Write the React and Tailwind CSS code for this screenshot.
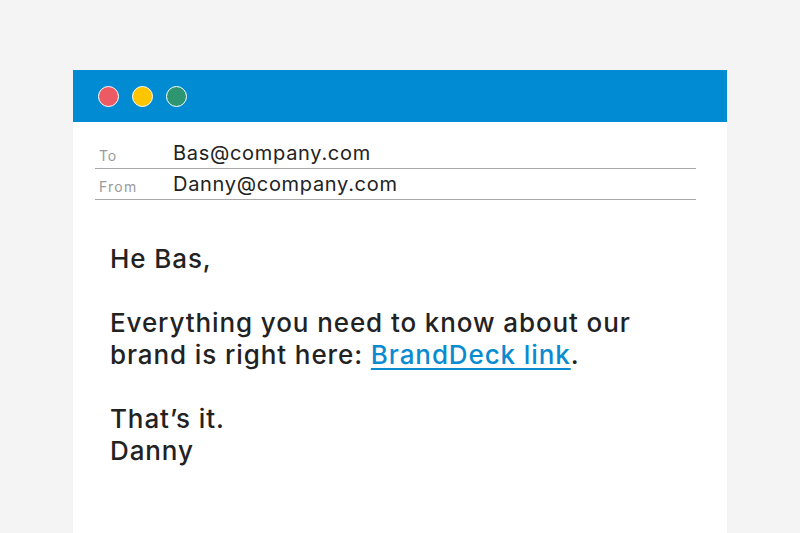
import React from "react";

const Dot = ({ color }) => (
  <span className={`block w-[21px] h-[21px] rounded-full border-[1.5px] border-white ${color}`} />
);

export default function App() {
  return (
    <div className="w-[800px] h-[533px] bg-[#f4f4f4] pt-[70px] overflow-hidden font-['Inter',sans-serif]">
      <div className="mx-[73px] w-[654px] h-[463px] bg-white">
        <div className="h-[52px] bg-[#008bd2] flex items-center gap-[13px] pl-[25px]">
          <Dot color="bg-[#ec5b64]" />
          <Dot color="bg-[#fdc500]" />
          <Dot color="bg-[#2e9571]" />
        </div>
        <div className="ml-[22px] w-[601px] mt-[18px]">
          <div className="flex items-end h-[29px] border-b border-[#a8a8a8] pb-[5px]">
            <span className="w-[78px] pl-[4px] text-[14px] tracking-[0.8px] text-[#9a9a9a] leading-none">To</span>
            <span className="text-[20px] tracking-[0.7px] text-[#222] leading-none">Bas@company.com</span>
          </div>
          <div className="flex items-end h-[31px] border-b border-[#a8a8a8] pb-[5px]">
            <span className="w-[78px] pl-[4px] text-[14px] tracking-[1.2px] text-[#9a9a9a] leading-none">From</span>
            <span className="text-[20px] tracking-[0.7px] text-[#222] leading-none">Danny@company.com</span>
          </div>
        </div>
        <div className="pl-[37px] pt-[43px] text-[26px] tracking-[0.9px] leading-[32px] text-[#222] font-medium">
          <p>He Bas,</p>
          <p className="mt-[32px]">Everything you need to know about our</p>
          <p>
            brand is right here:{" "}
            <a href="#" className="text-[#0a8bd0] underline underline-offset-[4px] decoration-[2px]">BrandDeck link</a>.
          </p>
          <p className="mt-[32px]">That’s it.</p>
          <p>Danny</p>
        </div>
      </div>
    </div>
  );
}
